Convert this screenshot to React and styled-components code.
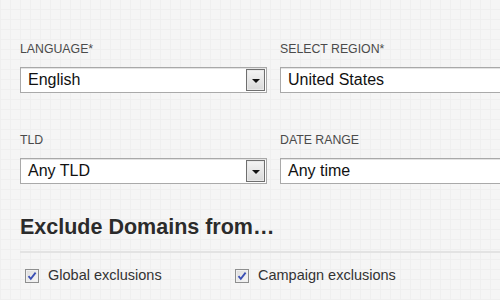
import React from 'react';
import styled, { createGlobalStyle } from 'styled-components';

const GlobalStyle = createGlobalStyle`
  html, body {
    margin: 0;
    padding: 0;
  }
  body {
    width: 500px;
    height: 300px;
    overflow: hidden;
    font-family: "Liberation Sans", Arial, sans-serif;
    background-color: #f5f5f5;
    background-image:
      repeating-linear-gradient(0deg, #efefef 0 1px, transparent 1px 10px),
      repeating-linear-gradient(90deg, #efefef 0 1px, transparent 1px 10px);
  }
`;

const Page = styled.div`
  padding: 42px 0 0 20px;
`;

const FieldRow = styled.div`
  display: grid;
  grid-template-columns: 247px 1fr;
  column-gap: 13px;
  margin-bottom: ${(p) => p.$gap || 0}px;
`;

const Field = styled.div`
  display: flex;
  flex-direction: column;
  min-width: 0;
`;

const Label = styled.label`
  font-size: 12.3px;
  line-height: 14px;
  color: #4a4a4a;
  text-transform: uppercase;
  margin-bottom: 11px;
`;

const Select = styled.div`
  box-sizing: border-box;
  height: 26px;
  display: flex;
  align-items: center;
  justify-content: space-between;
  padding: 0 1px 0 7px;
  background: #fff;
  border: 1px solid #a9a9a9;
  border-right: ${(p) => (p.$open ? 'none' : '1px solid #a9a9a9')};
  box-shadow: inset 0 1px 0 #e4e4e4;
  font-size: 16px;
  color: #111;
`;

const DropButton = styled.span`
  box-sizing: border-box;
  width: 19px;
  height: 22px;
  display: flex;
  align-items: center;
  justify-content: center;
  border: 1px solid #6f6f6f;
  box-shadow: inset 0 0 0 1px #e9e9e9;
  background: linear-gradient(#f4f4f4, #d9d9d9);
`;

const Arrow = styled.span`
  width: 0;
  height: 0;
  border-left: 4px solid transparent;
  border-right: 4px solid transparent;
  border-top: 4px solid #111;
  margin-top: 1px;
`;

const Heading = styled.h2`
  margin: 31px 0 0;
  font-size: 21.5px;
  line-height: 25px;
  font-weight: bold;
  color: #2b2b2b;
`;

const Divider = styled.hr`
  margin: 11px 0 0;
  border: 0;
  height: 2px;
  background: #e3e3e3;
`;

const Checks = styled.div`
  display: grid;
  grid-template-columns: 210px auto;
  margin-top: 14px;
  padding-left: 5px;
`;

const CheckItem = styled.label`
  display: flex;
  align-items: center;
  gap: 9px;
  font-size: 14.5px;
  line-height: 17px;
  color: #333;
`;

const Box = styled.span`
  box-sizing: border-box;
  width: 14px;
  height: 14px;
  display: flex;
  align-items: center;
  justify-content: center;
  border: 1px solid #8e8f8f;
  box-shadow: inset 0 0 0 1px #f0f0f0;
  background: linear-gradient(135deg, #dcdcdc, #f8f8f8);
`;

const Check = () => (
  <Box>
    <svg width="10" height="10" viewBox="0 0 10 10">
      <path d="M1.5 5.2 L3.8 7.8 L8.6 1.6" fill="none" stroke="#3a4fb5" strokeWidth="1.8" />
    </svg>
  </Box>
);

const SelectField = ({ label, value, open }) => (
  <Field>
    <Label>{label}</Label>
    <Select $open={open}>
      {value}
      {!open && (
        <DropButton>
          <Arrow />
        </DropButton>
      )}
    </Select>
  </Field>
);

export default function App() {
  return (
    <>
      <GlobalStyle />
      <Page>
        <FieldRow $gap={40}>
          <SelectField label="Language*" value="English" />
          <SelectField label="Select Region*" value="United States" open />
        </FieldRow>
        <FieldRow>
          <SelectField label="TLD" value="Any TLD" />
          <SelectField label="Date Range" value="Any time" open />
        </FieldRow>
        <Heading>Exclude Domains from…</Heading>
        <Divider />
        <Checks>
          <CheckItem>
            <Check />
            Global exclusions
          </CheckItem>
          <CheckItem>
            <Check />
            Campaign exclusions
          </CheckItem>
        </Checks>
      </Page>
    </>
  );
}
